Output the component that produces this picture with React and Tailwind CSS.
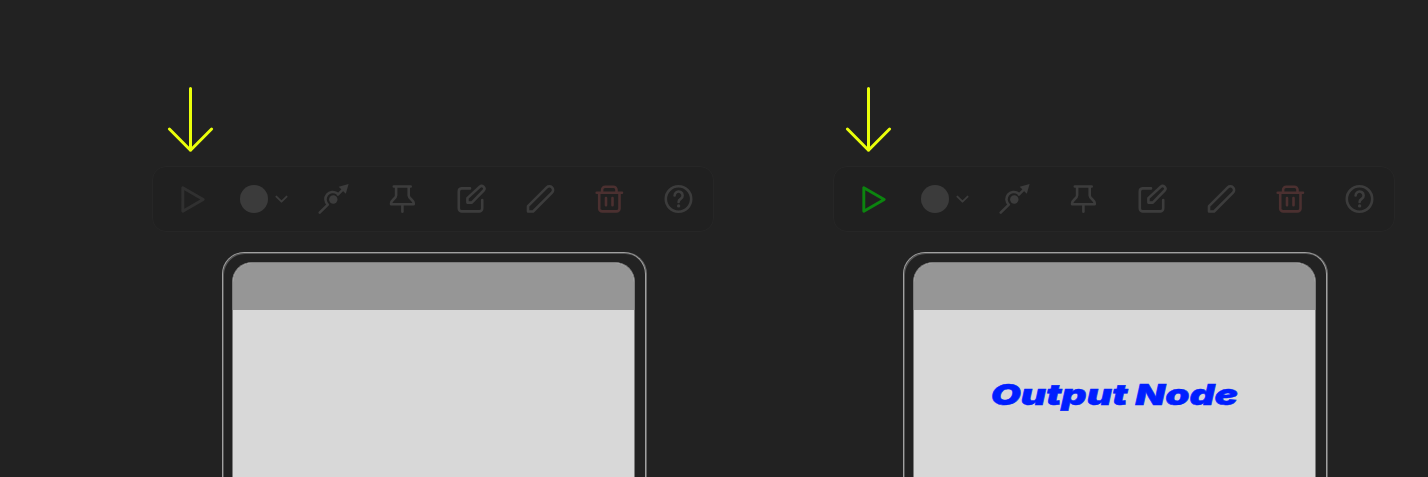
import React from "react";

function Icon({ children, className = "text-[#3c3c3c]" }) {
  return (
    <svg
      viewBox="-18 -18 36 36"
      className={`h-9 w-9 shrink-0 ${className}`}
      fill="none"
      stroke="currentColor"
      strokeWidth="2.6"
      strokeLinecap="round"
      strokeLinejoin="round"
    >
      {children}
    </svg>
  );
}

function Arrow({ className }) {
  return (
    <svg
      viewBox="0 0 48 68"
      className={`block h-[68px] w-12 shrink-0 ${className}`}
      fill="none"
      stroke="#eaff0a"
      strokeWidth="3"
      strokeLinecap="round"
      strokeLinejoin="round"
    >
      <path d="M24.5 3.5V65.2M3.4 44L24.5 65.2L45.6 44" />
    </svg>
  );
}

function Toolbar({ active }) {
  return (
    <div className="mt-[13px] flex h-[66px] w-[562px] shrink-0 items-center rounded-[14px] border border-[#262626] bg-[#202020] pl-[21px]">
      <Icon className={active ? "text-[#0c840f]" : "text-[#303030]"}>
        <path d="M-9.2-11.2V12.3L11.2.4Z" strokeWidth="2.9" />
      </Icon>
      <div className="ml-[30px] flex h-9 items-center">
        <div className="-mt-px h-7 w-7 rounded-full bg-[#3b3b3b]" />
        <svg viewBox="0 0 16 16" className="ml-1.5 h-4 w-4" fill="none" stroke="#3c3c3c" strokeWidth="1.9" strokeLinecap="round" strokeLinejoin="round">
          <path d="M2.4 5.6L7.5 10.7L12.6 5.6" />
        </svg>
      </div>
      <div className="ml-[25px] flex items-center gap-[33px]">
        <Icon>
          <circle cx=".3" cy=".5" r="4.2" fill="currentColor" stroke="none" />
          <path d="M-13.3 13.6L-5.2 5.6M-5.2 5.6A7.3 7.3 0 0 1 4-5.7M4.9-4.4L10.6-10.2" />
          <path d="M15.6-15L5.7-12.2L12.8-5.2Z" fill="currentColor" stroke="none" />
        </Icon>
        <Icon>
          <path d="M-8.2-12.5H8.7M-5.9-12.5V-3.6C-5.9-.8-10.9 1.2-10.9 4V5.2H11.7V4C11.7 1.2 6.7-.8 6.7-3.6V-12.5M.4 5.2V12.7" />
        </Icon>
        <Icon>
          <path d="M-1-10.6H-9.5A3 3 0 0 0-12.2-7.6V9.4A3 3 0 0 0-9.2 12.4H8.2A3 3 0 0 0 11.2 9.4V1" />
          <path d="M-3.6 3.6V-.9L8.7-12.2A2.4 2.4 0 0 1 12.6-8.5L.8 3.6Z" />
        </Icon>
        <Icon>
          <path d="M-12 12.5V7.2L6.8-11.6A3.65 3.65 0 0 1 12-6.4L-6.9 12.5Z" />
        </Icon>
        <Icon className="text-[#4b3030]">
          <path d="M-12.3-6.3H13M-9.8-6.3V9.4A3 3 0 0 0-6.8 12.4H7.5A3 3 0 0 0 10.5 9.4V-6.3M-6.9-6.6V-9.2A3 3 0 0 1-3.9-12.2H4.5A3 3 0 0 1 7.5-9.2V-6.6M-3-1V6.3M3.5-1V6.3" />
        </Icon>
        <Icon>
          <circle cx=".5" cy="0" r="12.7" />
          <path d="M-3.4-3.5A4 4 0 1 1 2.7-.1C1.2.8.6 1.4.6 3" />
          <circle cx=".6" cy="6.9" r="1.7" fill="currentColor" stroke="none" />
        </Icon>
      </div>
    </div>
  );
}

function Device({ children }) {
  return (
    <div className="ml-[70px] mt-5 h-[245px] w-[424px] shrink-0 rounded-t-[22px] border-x border-t border-[#a0a0a0] pl-[9px] pt-[9px] shadow-[inset_1px_1px_0_#555555,1px_0_0_#666666]">
      <div className="h-full w-[403px] overflow-hidden rounded-t-[20px] border-x border-t border-[#7d7d7d] bg-[#d8d8d8]">
        <div className="h-[47px] bg-[#969696]" />
        {children}
      </div>
    </div>
  );
}

export default function App() {
  return (
    <main className="flex h-[477px] w-[1428px] overflow-hidden bg-[#222222] pl-[152px] pt-[85px]">
      <section className="flex w-[681px] shrink-0 flex-col">
        <Arrow className="ml-[14px]" />
        <Toolbar />
        <Device />
      </section>
      <section className="flex w-[562px] shrink-0 flex-col">
        <Arrow className="ml-[11px]" />
        <Toolbar active />
        <Device>
          <div className="mt-[67px] flex justify-center font-['Inter',sans-serif]">
            <span className="origin-center scale-x-[1.34] whitespace-nowrap text-[29px] font-black italic leading-9 text-[#001eff] [-webkit-text-stroke:0.5px_#001eff]">
              Output Node
            </span>
          </div>
        </Device>
      </section>
    </main>
  );
}
